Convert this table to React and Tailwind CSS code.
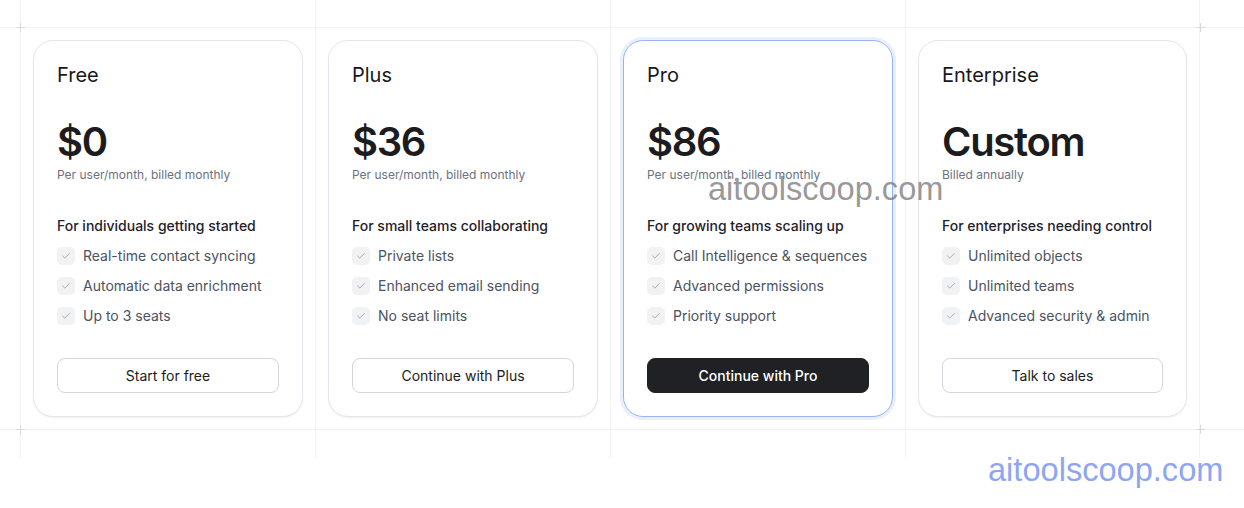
import { Check } from 'lucide-react'

const plans = [
  {
    name: 'Free',
    price: '$0',
    note: 'Per user/month, billed monthly',
    heading: 'For individuals getting started',
    features: ['Real-time contact syncing', 'Automatic data enrichment', 'Up to 3 seats'],
    cta: 'Start for free',
  },
  {
    name: 'Plus',
    price: '$36',
    note: 'Per user/month, billed monthly',
    heading: 'For small teams collaborating',
    features: ['Private lists', 'Enhanced email sending', 'No seat limits'],
    cta: 'Continue with Plus',
  },
  {
    name: 'Pro',
    price: '$86',
    note: 'Per user/month, billed monthly',
    heading: 'For growing teams scaling up',
    features: ['Call Intelligence & sequences', 'Advanced permissions', 'Priority support'],
    cta: 'Continue with Pro',
    featured: true,
  },
  {
    name: 'Enterprise',
    price: 'Custom',
    note: 'Billed annually',
    heading: 'For enterprises needing control',
    features: ['Unlimited objects', 'Unlimited teams', 'Advanced security & admin'],
    cta: 'Talk to sales',
  },
]

function Plus({ className }) {
  return (
    <div className={`absolute w-[9px] h-[9px] ${className}`}>
      <div className="absolute left-[4px] top-0 h-[9px] w-px bg-[#d6d8dd]" />
      <div className="absolute top-[4px] left-0 w-[9px] h-px bg-[#d6d8dd]" />
    </div>
  )
}

function Strip({ height }) {
  return (
    <div className={`flex ml-[20px] ${height}`}>
      {plans.map((p, i) => (
        <div
          key={p.name}
          className={`w-[295px] border-l border-[#f2f3f5] ${i === 3 ? 'border-r' : ''}`}
        />
      ))}
    </div>
  )
}

function PlanCard({ plan }) {
  return (
    <div
      className={`flex flex-col rounded-[20px] border bg-white px-[23px] pt-5 pb-[23px] shadow-[0_1px_2px_rgba(16,24,40,0.06)] ${
        plan.featured
          ? 'border-[#97b4f4] ring-[3px] ring-[#e9effd]'
          : 'border-[#e4e6eb]'
      }`}
    >
      <div className="text-[20px] leading-7 text-[#18181b]">{plan.name}</div>
      <div className="mt-[33px] text-[40px] leading-none font-semibold tracking-[-1.3px] text-[#1c1c1f]">
        {plan.price}
      </div>
      <div className="mt-[5px] text-xs leading-4 text-[#6b7280]">{plan.note}</div>
      <div className="mt-[33px] text-sm leading-5 font-medium text-[#1f2229]">
        {plan.heading}
      </div>
      <ul className="mt-[10px] flex flex-col gap-[10px]">
        {plan.features.map((f) => (
          <li key={f} className="flex items-center gap-2 text-sm leading-5 text-[#4b5260]">
            <span className="flex h-[18px] w-[18px] items-center justify-center rounded-[5px] bg-[#f1f2f4]">
              <Check size={10} strokeWidth={1.7} className="text-[#868c96]" />
            </span>
            {f}
          </li>
        ))}
      </ul>
      <button
        className={`mt-8 h-[35px] w-full rounded-lg border text-sm ${
          plan.featured
            ? 'border-[#202124] bg-[#202124] font-medium text-white'
            : 'border-[#d3d6dc] bg-white text-[#1a1c21]'
        }`}
      >
        {plan.cta}
      </button>
    </div>
  )
}

export default function App() {
  return (
    <div
      className="relative w-[1244px] h-[508px] overflow-hidden bg-white"
      style={{ fontFamily: 'Inter, "Noto Sans", sans-serif' }}
    >
      <Strip height="h-[27px]" />
      <div className="border-y border-[#f2f3f5]">
        <div className="flex ml-[20px]">
          {plans.map((p, i) => (
            <div
              key={p.name}
              className={`w-[295px] border-l border-[#f2f3f5] px-3 py-3 ${i === 3 ? 'border-r' : ''}`}
            >
              <PlanCard plan={p} />
            </div>
          ))}
        </div>
      </div>
      <Strip height="h-[28px]" />

      <Plus className="left-[16px] top-[23px]" />
      <Plus className="left-[1196px] top-[23px]" />
      <Plus className="left-[16px] top-[425px]" />
      <Plus className="left-[1196px] top-[425px]" />

      <div
        className="absolute left-[708px] top-[171px] text-[32.6px] leading-9 text-[#7d7d7d]/80"
        style={{ fontFamily: '"Liberation Sans", Arial, sans-serif' }}
      >
        aitoolscoop.com
      </div>
      <div
        className="absolute left-[988px] top-[452px] text-[32.6px] leading-9 text-[#8ea6f2]"
        style={{ fontFamily: '"Liberation Sans", Arial, sans-serif' }}
      >
        aitoolscoop.com
      </div>
    </div>
  )
}
